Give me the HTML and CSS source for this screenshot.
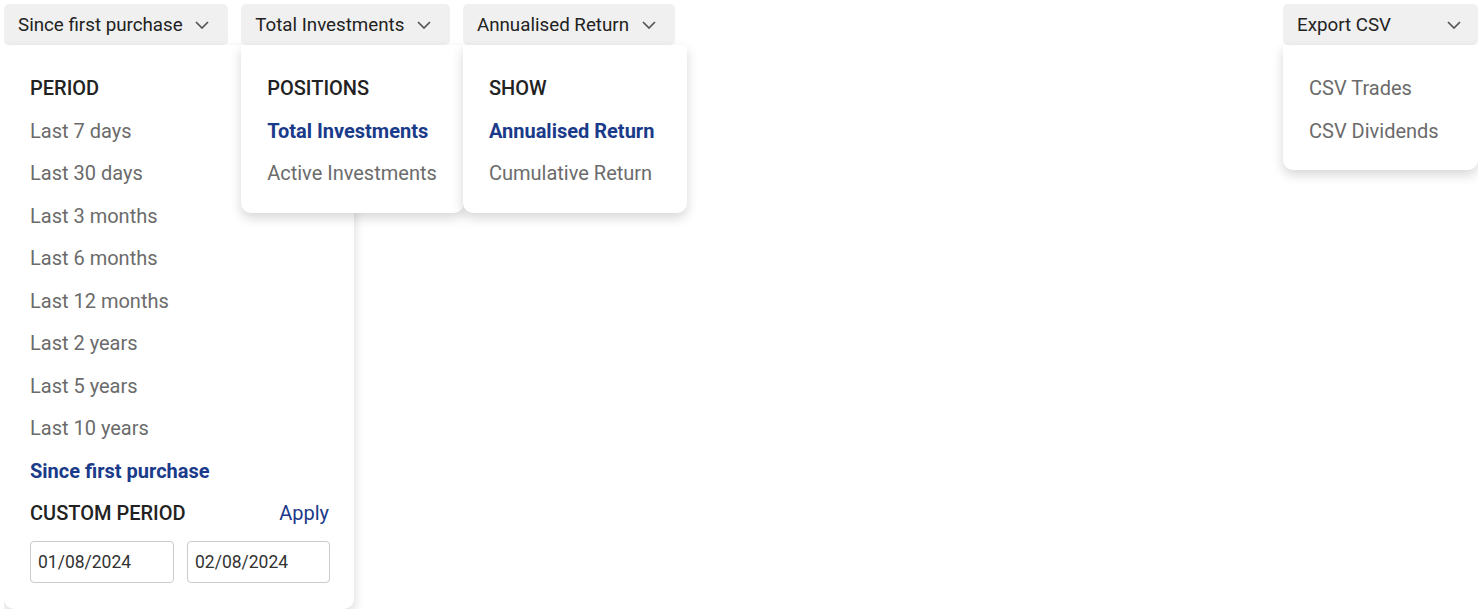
FILE: index.html
```html
<!DOCTYPE html>
<html lang="en">
<head>
<meta charset="utf-8">
<title>Filters</title>
<link rel="stylesheet" href="styles.css">
</head>
<body>
<div class="page">
<div class="toolbar">
  <div class="picker">
    <button class="picker-btn"><span>Since first purchase</span><svg class="chev" viewBox="0 0 14 8" width="14" height="8"><path d="M1 1 L7 7 L13 1" /></svg></button>
    <div class="panel panel-period">
      <div class="panel-head">PERIOD</div>
      <div class="option">Last 7 days</div>
      <div class="option">Last 30 days</div>
      <div class="option">Last 3 months</div>
      <div class="option">Last 6 months</div>
      <div class="option">Last 12 months</div>
      <div class="option">Last 2 years</div>
      <div class="option">Last 5 years</div>
      <div class="option">Last 10 years</div>
      <div class="option selected">Since first purchase</div>
      <div class="custom-row">
        <span class="panel-head">CUSTOM PERIOD</span>
        <span class="apply">Apply</span>
      </div>
      <div class="date-row">
        <input class="date" type="text" value="01/08/2024">
        <input class="date" type="text" value="02/08/2024">
      </div>
    </div>
  </div>
  <div class="picker">
    <button class="picker-btn"><span>Total Investments</span><svg class="chev" viewBox="0 0 14 8" width="14" height="8"><path d="M1 1 L7 7 L13 1" /></svg></button>
    <div class="panel panel-positions">
      <div class="panel-head">POSITIONS</div>
      <div class="option selected">Total Investments</div>
      <div class="option">Active Investments</div>
    </div>
  </div>
  <div class="picker">
    <button class="picker-btn"><span>Annualised Return</span><svg class="chev" viewBox="0 0 14 8" width="14" height="8"><path d="M1 1 L7 7 L13 1" /></svg></button>
    <div class="panel panel-show">
      <div class="panel-head">SHOW</div>
      <div class="option selected">Annualised Return</div>
      <div class="option">Cumulative Return</div>
    </div>
  </div>
  <div class="picker picker-export">
    <button class="picker-btn picker-btn-wide"><span>Export CSV</span><svg class="chev" viewBox="0 0 14 8" width="14" height="8"><path d="M1 1 L7 7 L13 1" /></svg></button>
    <div class="panel panel-export">
      <div class="option">CSV Trades</div>
      <div class="option">CSV Dividends</div>
    </div>
  </div>
</div>
</div>
</body>
</html>
```

FILE: styles.css
```css
* { box-sizing: border-box; }
body {
  margin: 4px;
  font-family: Roboto, "Liberation Sans", Arial, sans-serif;
  font-size: 18.75px;
  color: #222;
  background: #fff;
}
.page {
  min-height: 605px;
}
.toolbar {
  display: flex;
  gap: 13px;
  align-items: flex-start;
}
.picker {
  position: relative;
}
.picker-export {
  margin-left: auto;
}
.picker-btn {
  display: flex;
  align-items: center;
  gap: 12.5px;
  height: 41px;
  padding: 0 19px 0 14px;
  border: none;
  border-radius: 5px;
  background: #f0f0f0;
  font-family: inherit;
  font-size: 18.75px;
  color: #222;
  cursor: pointer;
}
.picker-btn-wide {
  width: 195px;
  justify-content: space-between;
  padding-right: 17px;
}
.chev {
  fill: none;
  stroke: #555;
  stroke-width: 1.7;
  margin-top: 1px;
}
.panel {
  position: absolute;
  top: 41px;
  left: 0;
  background: #fff;
  border-radius: 0 0 10px 10px;
  box-shadow: 0 5px 12px rgba(0, 0, 0, 0.16);
  padding: 22px 26px 18px 26px;
  font-size: 20px;
}
.panel-period { width: 350px; padding-bottom: 26px; padding-right: 25px; }
.panel-positions { width: 223px; }
.panel-show { width: 224px; }
.panel-export { width: 195px; }
.panel-head {
  line-height: 42.5px;
  font-weight: 500;
  color: #222;
  white-space: nowrap;
}
.option {
  line-height: 42.5px;
  color: #6b6b6b;
  white-space: nowrap;
}
.option.selected {
  color: #1a3a8a;
  font-weight: 700;
}
.custom-row {
  display: flex;
  justify-content: space-between;
  align-items: center;
}
.apply {
  color: #1a3a8a;
  line-height: 42.5px;
}
.date-row {
  display: flex;
  gap: 13px;
  margin-top: 6px;
}
.date {
  width: 144px;
  height: 42px;
  border: 1px solid #cbcbcb;
  border-radius: 4px;
  padding: 0 7px;
  font-family: inherit;
  font-size: 17.5px;
  color: #333;
  background: #fff;
}
.date + .date { width: 143px; }
```
